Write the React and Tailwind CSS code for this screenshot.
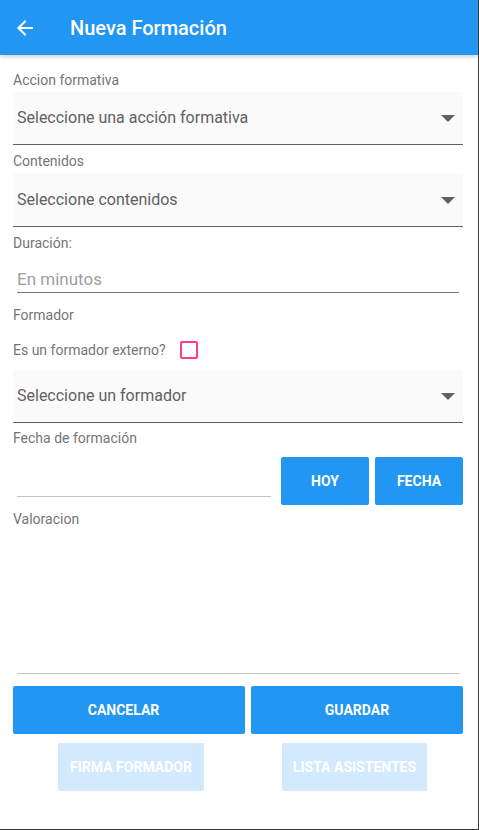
const Label = ({ children, className = "" }) => (
  <div className={`text-[14px] leading-[16px] text-[#757575] ${className}`}>
    {children}
  </div>
);

const Select = ({ text, className = "" }) => (
  <div
    className={`h-[53px] bg-[#fafafa] border-b border-[#616161] flex items-center justify-between pl-[4px] pr-[8px] ${className}`}
  >
    <span className="text-[16px] text-[#616161]">{text}</span>
    <svg width="14" height="7" viewBox="0 0 14 7">
      <path d="M0 0h14L7 7z" fill="#616161" />
    </svg>
  </div>
);

const Button = ({ children, className = "" }) => (
  <button
    className={`h-[48px] rounded-[2px] bg-[#2196f3] text-white text-[14px] font-bold uppercase flex items-center justify-center ${className}`}
  >
    {children}
  </button>
);

export default function App() {
  return (
    <div
      className="w-[479px] h-[830px] bg-white border-r border-b border-[#3a3a3a] flex flex-col overflow-hidden"
      style={{ fontFamily: "Roboto, 'Noto Sans', sans-serif" }}
    >
      {/* Cabecera */}
      <div className="h-[55px] shrink-0 bg-[#2196f3] flex items-center shadow-[0_2px_4px_rgba(0,0,0,0.18)] relative z-10">
        <svg width="24" height="24" viewBox="0 0 24 24" className="ml-[13px]">
          <path
            d="M20 11H7.83l5.59-5.59L12 4l-8 8 8 8 1.41-1.41L7.83 13H20v-2z"
            fill="white"
          />
        </svg>
        <h1 className="ml-[33px] text-white text-[20px] font-medium">
          Nueva Formación
        </h1>
      </div>

      <div className="px-[13px] pr-[15px] flex flex-col">
        {/* Accion formativa */}
        <Label className="mt-[17px]">Accion formativa</Label>
        <Select className="mt-[4px]" text="Seleccione una acción formativa" />

        {/* Contenidos */}
        <Label className="mt-[8px]">Contenidos</Label>
        <Select className="mt-[5px]" text="Seleccione contenidos" />

        {/* Duración */}
        <Label className="mt-[8px]">Duración:</Label>
        <div className="mt-[2px] mx-[4px] h-[40px] border-b border-[#757575] flex items-end pb-[3px]">
          <span className="text-[17px] leading-[20px] text-[#9e9e9e]">
            En minutos
          </span>
        </div>

        {/* Formador */}
        <Label className="mt-[14px]">Formador</Label>
        <div className="mt-[18px] flex items-center h-[18px]">
          <span className="text-[14px] leading-[16px] text-[#757575]">
            Es un formador externo?
          </span>
          <div className="ml-[14px] w-[18px] h-[18px] border-2 border-[#ff4081] rounded-[2px]" />
        </div>
        <Select className="mt-[11px]" text="Seleccione un formador" />

        {/* Fecha */}
        <Label className="mt-[7px]">Fecha de formación</Label>
        <div className="mt-[11px] flex items-start">
          <div className="ml-[4px] w-[254px] h-[40px] border-b border-[#c6c6c6]" />
          <Button className="ml-[10px] w-[88px]">Hoy</Button>
          <Button className="ml-[6px] w-[88px]">Fecha</Button>
        </div>

        {/* Valoracion */}
        <Label className="mt-[6px]">Valoracion</Label>
        <div className="mx-[4px] h-[147px] border-b border-[#c6c6c6]" />

        {/* Acciones */}
        <div className="mt-[12px] flex gap-[6px]">
          <Button className="w-[232px] pr-[11px]">Cancelar</Button>
          <Button className="w-[212px]">Guardar</Button>
        </div>
        <div className="mt-[9px] flex">
          <Button className="ml-[45px] w-[146px] bg-[#d3e9fd]">
            Firma formador
          </Button>
          <Button className="ml-[78px] w-[145px] bg-[#d3e9fd]">
            Lista asistentes
          </Button>
        </div>
      </div>
    </div>
  );
}
